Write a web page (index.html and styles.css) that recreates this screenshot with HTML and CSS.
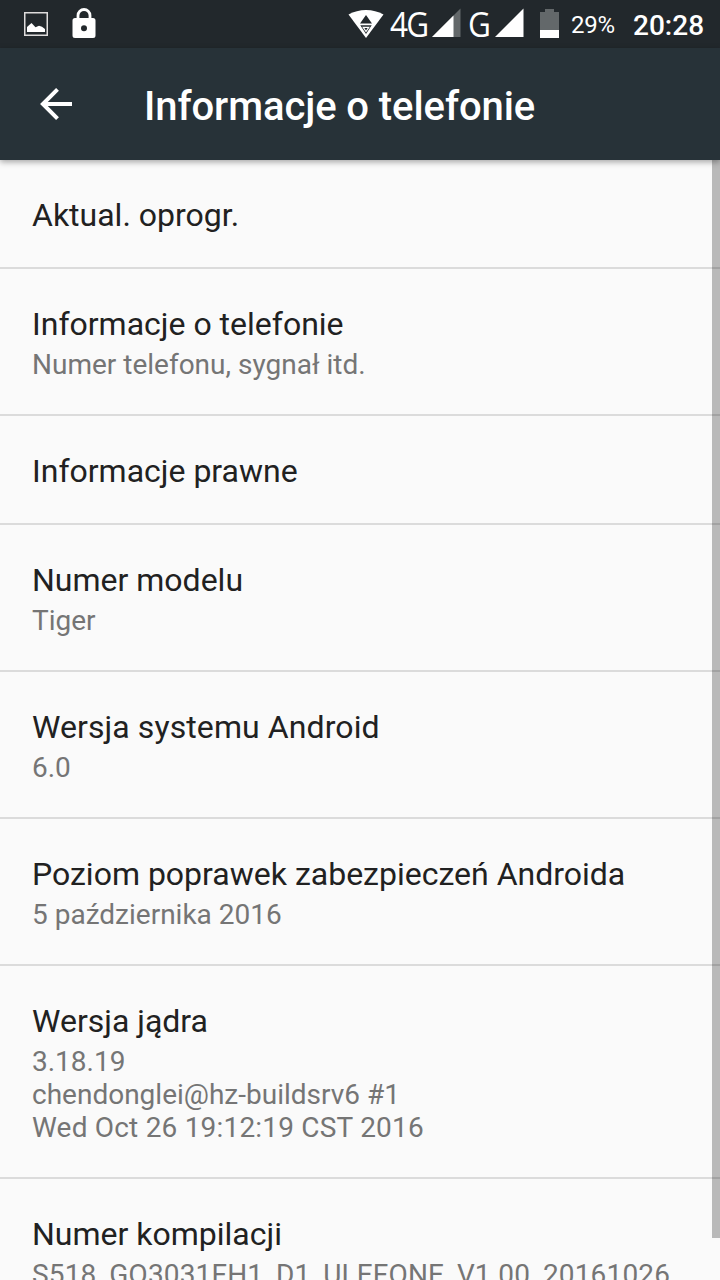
FILE: index.html
```html
<!DOCTYPE html>
<html lang="pl">
<head>
<meta charset="utf-8">
<title>Informacje o telefonie</title>
<link rel="stylesheet" href="styles.css">
</head>
<body>
<div class="screen">
  <div class="status">
    <svg class="icon-picture" width="24" height="24" viewBox="0 0 24 24"><path d="M.75.75h22.5v22.5H.75z" fill="none" stroke="#dedcdc" stroke-width="1.5"/><path d="M3 20v-5l4.500-4 4 4.200 3.500-1.400 3 1L21 17v3z" fill="#fff"/></svg>
    <svg class="icon-lock" width="24" height="30" viewBox="0 0 24 30"><path d="M6 11V7.500a6 6 0 0 1 12 0V11" fill="none" stroke="#fff" stroke-width="2.800"/><path fill-rule="evenodd" d="M3 10h18q2.500 0 2.500 2.500v15q0 2.500-2.500 2.500H3Q.5 30 .5 27.500v-15Q.5 10 3 10zm9 7.200a3 3 0 1 0 0 6 3 3 0 0 0 0-6z" fill="#fff"/></svg>
    <svg class="icon-wifi" width="36" height="30" viewBox="0 0 36 30"><path d="M.5 6.500Q8.500 2 18 2t17.500 4.500L18 30z" fill="#fff"/><path d="M18 7l6 8.500H12zM12.300 17.200h11.400L18 26z" fill="#22282c"/><path d="M15.200 19.300h5.600L18 23.500z" fill="#22282c" stroke="#fff" stroke-width="1.200"/></svg>
    <span class="network network-4g">4G</span>
    <svg class="signal-first" width="29" height="30" viewBox="0 0 29 30"><path d="M0 29L28.500.5V29z" fill="#63686a"/><path d="M0 29L21.500 7.500V29z" fill="#fff"/></svg>
    <span class="network network-g">G</span>
    <svg class="signal-second" width="29" height="30" viewBox="0 0 29 30"><path d="M0 29L28.500.5V29z" fill="#fff"/></svg>
    <svg class="icon-battery" width="19" height="30" viewBox="0 0 19 30"><path d="M5 1h9v3h5v26H0V4h5z" fill="#63686a"/><path d="M0 22h19v8H0z" fill="#fff"/></svg>
    <span class="percent">29%</span>
    <span class="clock">20:28</span>
  </div>
  <header class="toolbar">
    <svg class="back" width="32" height="32" viewBox="0 0 32 32"><path d="M32 16H3M17.500 1.400L2.900 16l14.600 14.600" fill="none" stroke="#fff" stroke-width="4"/></svg>
    <h1 class="heading">Informacje o telefonie</h1>
  </header>
  <main class="list">
    <section class="row"><h2 class="title">Aktual. oprogr.</h2></section>
    <section class="row"><h2 class="title">Informacje o telefonie</h2><p class="summary">Numer telefonu, sygnał itd.</p></section>
    <section class="row"><h2 class="title">Informacje prawne</h2></section>
    <section class="row"><h2 class="title">Numer modelu</h2><p class="summary">Tiger</p></section>
    <section class="row"><h2 class="title title-loose">Wersja systemu Android</h2><p class="summary">6.0</p></section>
    <section class="row"><h2 class="title">Poziom poprawek zabezpieczeń Androida</h2><p class="summary">5 października 2016</p></section>
    <section class="row"><h2 class="title">Wersja jądra</h2><p class="summary">3.18.19<br>chendonglei@hz-buildsrv6 #1<br><span class="build-date">Wed Oct 26 19:12:19 CST 2016</span></p></section>
    <section class="row"><h2 class="title">Numer kompilacji</h2><p class="summary build-number">S518_GQ3031FH1_D1_ULEFONE_V1.00_20161026</p></section>
    <div class="scrollbar"></div>
  </main>
</div>
</body>
</html>
```
FILE: styles.css
```css
* { box-sizing: border-box; }
body { margin: 0; font-family: Roboto, sans-serif; }
.screen {
  display: flex;
  flex-direction: column;
  width: 720px;
  height: 1280px;
  overflow: hidden;
  background: #fafafa;
}
.status {
  display: flex;
  flex: none;
  height: 48px;
  padding: 8px 0 0 24px;
  background: #22282c;
  color: #fff;
  white-space: nowrap;
}
.status svg { flex: none; }
.icon-picture { margin-top: 4px; }
.icon-lock { margin-left: 24px; }
.icon-wifi { margin-left: 252px; }
.network {
  flex: none;
  margin-top: -2px;
  font: 35px/36px "Open Sans", sans-serif;
  transform: scaleX(.9);
  transform-origin: 0 0;
}
.network-4g { width: 42px; margin-left: 6px; letter-spacing: -2px; }
.signal-first { margin-left: 0; }
.network-g { width: 26px; margin-left: 7px; }
.signal-second { margin-left: 1px; }
.icon-battery { margin-left: 16px; }
.percent { width: 46px; margin-left: 12px; font-size: 24px; letter-spacing: -.2px; line-height: 34px; }
.clock { margin-left: 16px; font-size: 28px; font-weight: 500; line-height: 35px; }
.toolbar {
  position: relative;
  z-index: 1;
  display: flex;
  flex: none;
  align-items: center;
  height: 112px;
  padding-left: 40px;
  background: #273238;
  box-shadow: 0 2px 6px rgba(0, 0, 0, .35);
}
.heading {
  margin: 6px 0 0 72px;
  color: #fff;
  font-size: 40px;
  font-weight: 500;
  letter-spacing: -.08px;
  line-height: 48px;
}
.list { position: relative; flex: 1; min-height: 0; }
.row { padding: 36px 32px 33px; border-bottom: 2px solid #dbdbdb; }
.title { margin: 0; color: #212121; font-size: 32px; font-weight: 400; line-height: 38px; white-space: nowrap; }
.title-loose { letter-spacing: .09px; }
.summary { margin: 5px 0 0; color: #757575; font-size: 28px; line-height: 33px; white-space: nowrap; }
.build-date { letter-spacing: .2px; }
.build-number { letter-spacing: .16px; }
.scrollbar {
  position: absolute;
  top: 0;
  right: 0;
  width: 8px;
  height: 1078px;
  background: rgba(0, 0, 0, .26);
}
```
